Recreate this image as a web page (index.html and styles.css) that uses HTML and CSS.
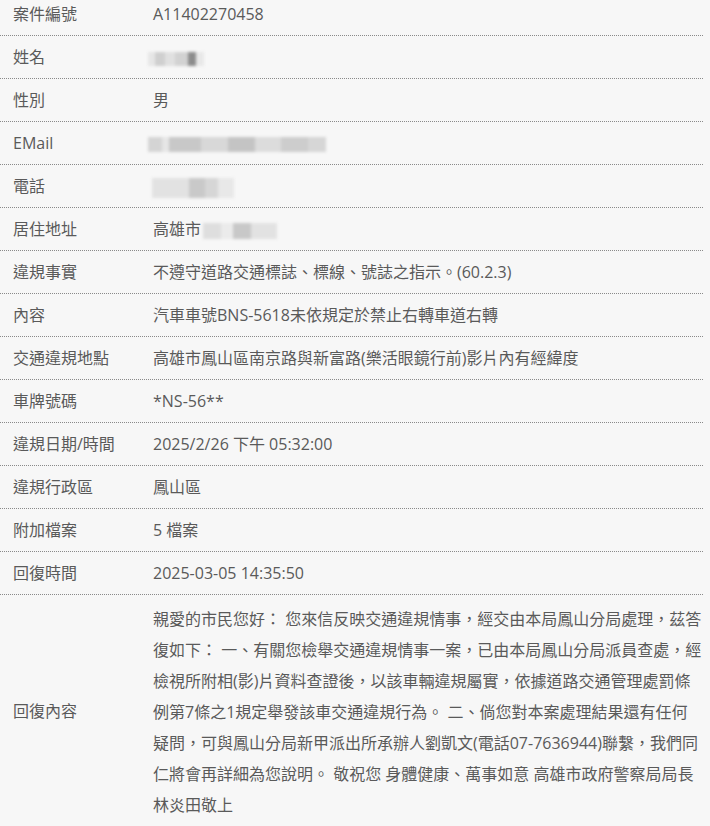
FILE: index.html
```html
<!DOCTYPE html>
<html lang="zh-Hant">
<head>
<meta charset="utf-8">
<link rel="stylesheet" href="styles.css">
</head>
<body>
<div class="sheet">
  <div class="row"><div class="label">案件編號</div><div class="value">A11402270458</div></div>
  <div class="row"><div class="label">姓名</div><div class="value"><span class="blur blur-name"></span></div></div>
  <div class="row"><div class="label">性別</div><div class="value">男</div></div>
  <div class="row"><div class="label">EMail</div><div class="value"><span class="blur blur-mail"></span></div></div>
  <div class="row"><div class="label">電話</div><div class="value"><span class="blur blur-phone"></span></div></div>
  <div class="row"><div class="label">居住地址</div><div class="value">高雄市<span class="blur blur-addr"></span></div></div>
  <div class="row"><div class="label">違規事實</div><div class="value">不遵守道路交通標誌、標線、號誌之指示。(60.2.3)</div></div>
  <div class="row"><div class="label">內容</div><div class="value">汽車車號BNS-5618未依規定於禁止右轉車道右轉</div></div>
  <div class="row"><div class="label">交通違規地點</div><div class="value">高雄市鳳山區南京路與新富路(樂活眼鏡行前)影片內有經緯度</div></div>
  <div class="row"><div class="label">車牌號碼</div><div class="value">*NS-56**</div></div>
  <div class="row"><div class="label">違規日期/時間</div><div class="value">2025/2/26 下午 05:32:00</div></div>
  <div class="row"><div class="label">違規行政區</div><div class="value">鳳山區</div></div>
  <div class="row"><div class="label">附加檔案</div><div class="value">5 檔案</div></div>
  <div class="row"><div class="label">回復時間</div><div class="value">2025-03-05 14:35:50</div></div>
  <div class="row row-reply"><div class="label">回復內容</div><div class="value reply">親愛的市民您好： 您來信反映交通違規情事，經交由本局鳳山分局處理，茲答復如下： 一、有關您檢舉交通違規情事一案，已由本局鳳山分局派員查處，經檢視所附相(影)片資料查證後，以該車輛違規屬實，依據道路交通管理處罰條例第7條之1規定舉發該車交通違規行為。 二、倘您對本案處理結果還有任何疑問，可與鳳山分局新甲派出所承辦人劉凱文(電話07-7636944)聯繫，我們同仁將會再詳細為您說明。 敬祝您 身體健康、萬事如意 高雄市政府警察局局長 林炎田敬上</div></div>
</div>
</body>
</html>
```

FILE: styles.css
```css
html, body {
  margin: 0;
  padding: 0;
  background: #f7f7f7;
}
body {
  font-family: "Open Sans", "Noto Sans CJK TC", sans-serif;
  font-size: 16px;
  color: #5a5a5a;
}
.sheet {
  width: 703px;
  margin-top: -7px;
}
.row {
  display: grid;
  grid-template-columns: 140px 1fr;
  border-bottom: 1px dotted #8a8a8a;
}
.label, .value {
  padding: 6px 8px 6px 13px;
  line-height: 30px;
  white-space: nowrap;
}
.row-reply {
  align-items: center;
  border-bottom: none;
}
.value.reply {
  white-space: normal;
  line-height: 31px;
  padding-top: 9px;
  padding-right: 0;
}
.blur {
  display: inline-block;
  vertical-align: middle;
  filter: blur(1.5px);
}
.blur-name {
  width: 56px;
  height: 14px;
  margin-left: -5px;
  background: linear-gradient(90deg, #e6e6e6 0 12%, #cfcfcf 12% 30%, #e0e0e0 30% 48%, #d2d2d2 48% 72%, #8c8c8c 72% 85%, #e8e8e8 85%);
}
.blur-mail {
  width: 178px;
  height: 15px;
  margin-left: -5px;
  background: linear-gradient(90deg, #d4d4d4 0 8%, #e6e6e6 8% 12%, #c8c8c8 12% 30%, #d8d8d8 30% 45%, #c4c4c4 45% 60%, #dcdcdc 60% 75%, #cdcdcd 75% 90%, #d6d6d6 90%);
}
.blur-phone {
  width: 82px;
  height: 20px;
  margin-left: -1px;
  background: linear-gradient(90deg, #e2e2e2 0 45%, #c9c9c9 45% 65%, #d6d6d6 65% 80%, #e8e8e8 80%);
}
.blur-addr {
  width: 74px;
  height: 16px;
  margin-left: 2px;
  background: linear-gradient(90deg, #dedede 0 25%, #ebebeb 25% 40%, #c8c8c8 40% 65%, #e2e2e2 65%);
}
```
